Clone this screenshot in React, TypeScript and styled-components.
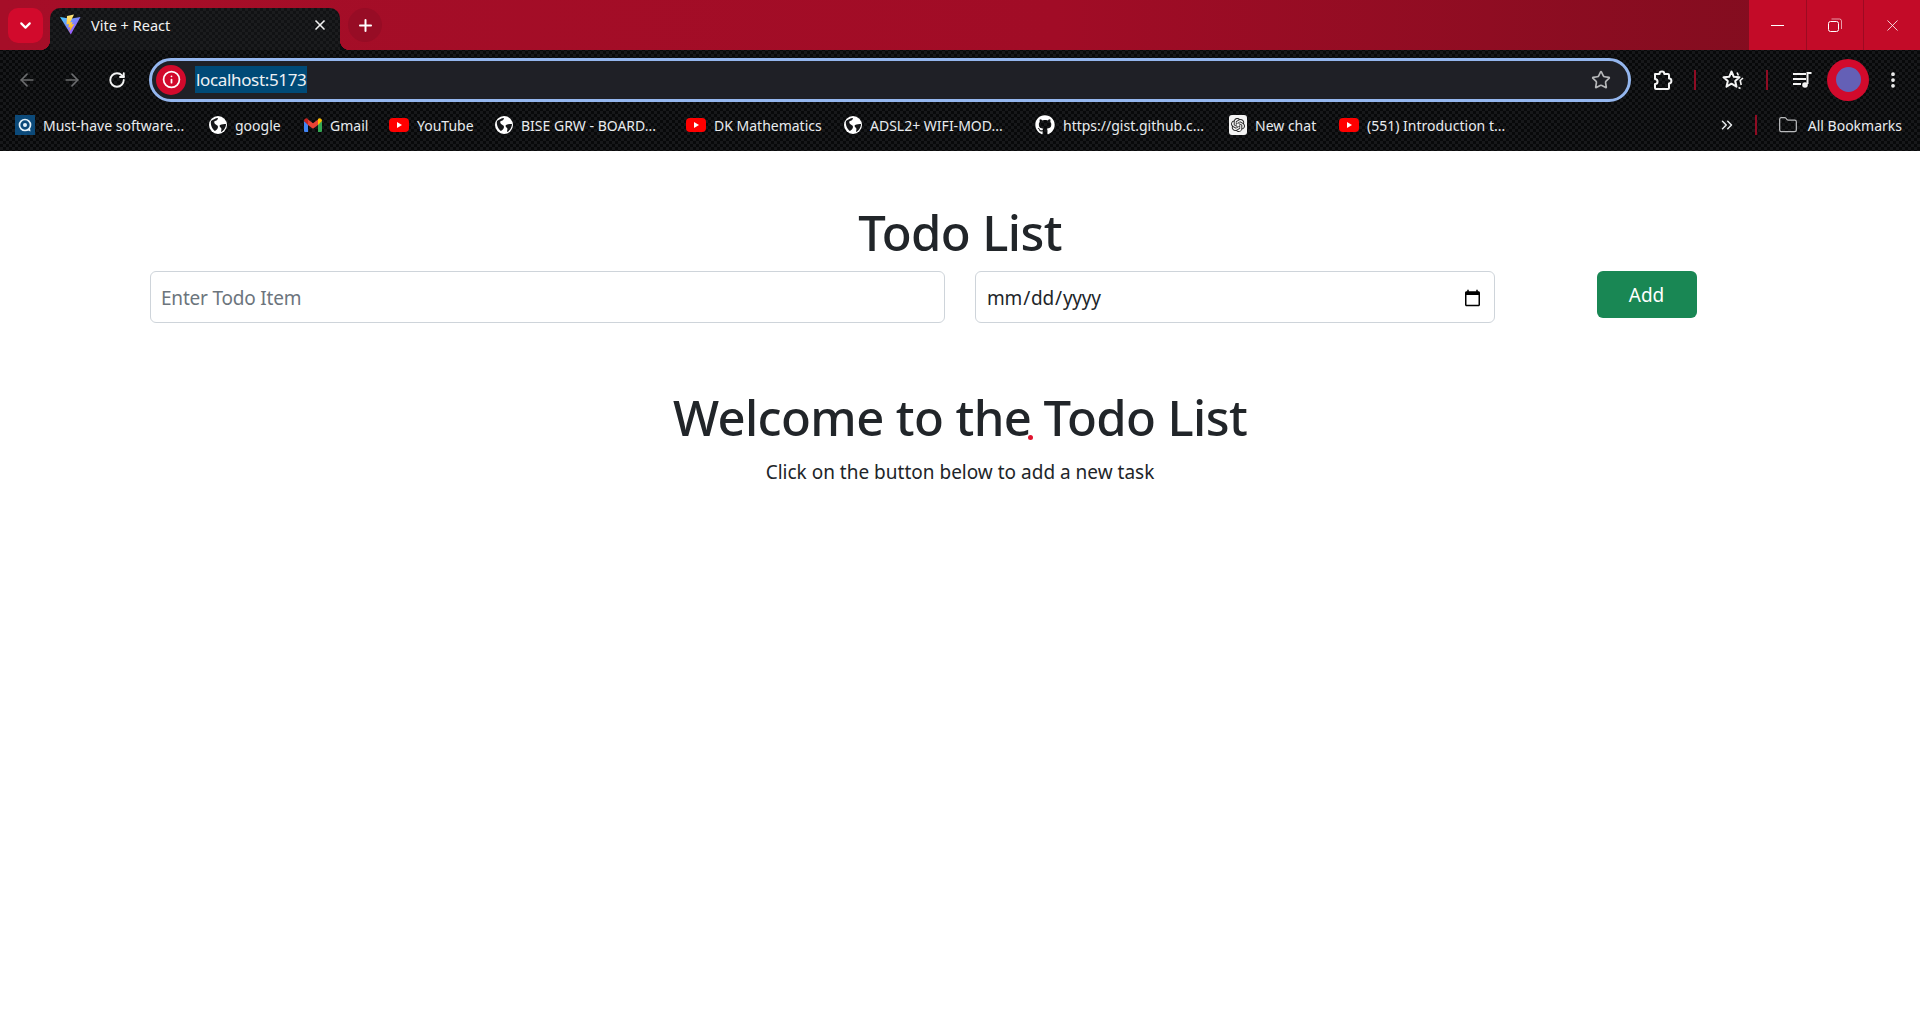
import { FC } from "react";
import styled, { createGlobalStyle } from "styled-components";
import {
  ArrowLeft,
  ArrowRight,
  ChevronDown,
  ChevronsRight,
  Folder,
  Info,
  MoreVertical,
  Plus,
  RotateCw,
  Star,
  X,
} from "lucide-react";
import { FaGithub } from "react-icons/fa";
import { SiOpenai } from "react-icons/si";

const UI_FONT = `"Noto Sans", "Open Sans", sans-serif`;

const GlobalStyle = createGlobalStyle`
  html, body {
    margin: 0;
    padding: 0;
    background: #fff;
    font-family: ${UI_FONT};
  }
  * { box-sizing: border-box; }
`;

const Chrome = styled.header`
  background-color: #08090a;
  background-image:
    linear-gradient(45deg, #17181a 25%, transparent 25%, transparent 75%, #17181a 75%),
    linear-gradient(45deg, #17181a 25%, transparent 25%, transparent 75%, #17181a 75%);
  background-size: 6px 6px;
  background-position: 0 0, 3px 3px;
`;

const TabStrip = styled.div`
  height: 50px;
  display: flex;
  background: linear-gradient(90deg, #a60e28 0%, #a10c26 55%, #7d0d1e 100%);
`;

const TabArea = styled.div`
  flex: 1;
  display: flex;
  align-items: flex-end;
  padding-left: 8px;
`;

const TabSearch = styled.button`
  width: 35px;
  height: 35px;
  margin-bottom: 7px;
  margin-right: 7px;
  border: none;
  border-radius: 10px;
  background: #d20a2c;
  color: #fff;
  display: flex;
  align-items: center;
  justify-content: center;
  padding: 0;
`;

const Tab = styled.div`
  position: relative;
  width: 290px;
  height: 42px;
  border-radius: 10px 10px 0 0;
  background-color: #111214;
  background-image:
    linear-gradient(45deg, #1b1c1e 25%, transparent 25%, transparent 75%, #1b1c1e 75%),
    linear-gradient(45deg, #1b1c1e 25%, transparent 25%, transparent 75%, #1b1c1e 75%);
  background-size: 6px 6px;
  background-position: 0 0, 3px 3px;
  display: flex;
  align-items: center;
  padding: 0 12px 9px 10px;
  color: #f2f2f2;

  &::before,
  &::after {
    content: "";
    position: absolute;
    bottom: 0;
    width: 10px;
    height: 10px;
  }
  &::before {
    left: -10px;
    background: radial-gradient(circle at 0 0, transparent 10px, #0c0d0f 10.5px);
  }
  &::after {
    right: -10px;
    background: radial-gradient(circle at 100% 0, transparent 10px, #0c0d0f 10.5px);
  }
`;

const TabTitle = styled.span`
  flex: 1;
  margin-left: 10px;
  font-size: 14.5px;
`;

const NewTab = styled.button`
  width: 34px;
  height: 34px;
  margin: 0 0 8px 8px;
  border: none;
  border-radius: 50%;
  background: #970c25;
  color: #fff;
  display: flex;
  align-items: center;
  justify-content: center;
  padding: 0;
`;

const WindowControls = styled.div`
  display: flex;
  background: #c30b28;
`;

const WindowButton = styled.div<{ $divided?: boolean }>`
  width: 57px;
  height: 50px;
  display: flex;
  align-items: center;
  justify-content: center;
  color: #fff;
  border-left: ${(p) => (p.$divided ? "1px solid #9c0a22" : "none")};
`;

const MinimizeBar = styled.span`
  width: 13px;
  height: 1px;
  background: #fff;
`;

const RestoreIcon = styled.svg`
  width: 14px;
  height: 14px;
`;

const Toolbar = styled.div`
  height: 57px;
  display: flex;
  align-items: center;
  padding: 2px 0 0 9px;
`;

const NavButton = styled.div<{ $dim?: boolean }>`
  width: 36px;
  height: 36px;
  margin-right: 9px;
  display: flex;
  align-items: center;
  justify-content: center;
  color: ${(p) => (p.$dim ? "#6b6c6e" : "#f4f4f4")};
`;

const AddressBar = styled.div`
  width: 1482px;
  height: 44px;
  margin-left: 5px;
  border: 3px solid #94b6ee;
  border-radius: 22px;
  background: #1f2026;
  display: flex;
  align-items: center;
  padding: 0 17px 0 4px;
`;

const SecurityBadge = styled.div`
  width: 30px;
  height: 30px;
  border-radius: 50%;
  background: #d20a2c;
  color: #fff;
  display: flex;
  align-items: center;
  justify-content: center;
`;

const Url = styled.span`
  margin-left: 9px;
  flex: 1;
  font-size: 17px;
  line-height: 27px;
  color: #eef1f4;
  letter-spacing: -0.35px;
`;

const SelectedUrl = styled.span`
  display: inline-block;
  background: #004a77;
  padding: 0 1px;
`;

const ToolButton = styled.div<{ $width: number }>`
  width: ${(p) => p.$width}px;
  height: 36px;
  display: flex;
  align-items: center;
  justify-content: center;
  color: #f4f4f4;
`;

const ToolDivider = styled.div`
  width: 2px;
  height: 20px;
  margin-left: -1px;
  margin-right: 1px;
  background: #8f0c23;
`;

const Avatar = styled.div`
  width: 42px;
  height: 42px;
  margin-left: -10px;
  border-radius: 50%;
  background: #d20a2c;
  display: flex;
  align-items: center;
  justify-content: center;

  &::after {
    content: "";
    width: 25px;
    height: 25px;
    border-radius: 50%;
    background: #6460b6;
  }
`;

const BookmarkBar = styled.nav`
  height: 44px;
  display: flex;
  align-items: center;
  padding: 0 18px 8px 15px;
  color: #e9ecef;
  font-size: 14px;
`;

const BookmarkItem = styled.a<{ $width?: number }>`
  display: flex;
  align-items: center;
  gap: 8px;
  width: ${(p) => (p.$width ? `${p.$width}px` : "auto")};
  flex: none;
  white-space: nowrap;
`;

const BookmarkTail = styled.div`
  margin-left: auto;
  display: flex;
  align-items: center;
  color: #e9ecef;
`;

const BarDivider = styled.div`
  width: 2px;
  height: 20px;
  margin: 0 21px 0 19px;
  background: #8f0c23;
`;

const FolderIcon = styled(Folder)`
  margin-right: 2px;
`;

const ChatIcon = styled.span`
  width: 18px;
  height: 20px;
  border-radius: 3px;
  background: #f4f4f4;
  color: #222;
  display: flex;
  align-items: center;
  justify-content: center;
  flex: none;
`;

const Main = styled.main`
  padding: 0 138px;
  text-align: center;
  color: #212529;
`;

const Title = styled.h1`
  margin: 0;
  padding-top: 51px;
  font-size: 49px;
  font-weight: 500;
  line-height: 60px;
  letter-spacing: -0.6px;
`;

const TodoRow = styled.div`
  display: grid;
  grid-template-columns: 819px 544px 1fr;
  column-gap: 6px;
  margin-top: 9px;
  align-items: start;
`;

const Cell = styled.div`
  padding: 0 12px;
`;

const Field = styled.input`
  display: block;
  width: 100%;
  height: 52px;
  padding: 7px 10px 5px;
  border: 1px solid #ced4da;
  border-radius: 6px;
  background: #fff;
  color: #212529;
  font-family: ${UI_FONT};
  font-size: 19px;
  letter-spacing: -0.2px;

  &::placeholder {
    color: #6c757d;
  }
`;

const AddButton = styled.button`
  width: 100px;
  height: 47px;
  margin-left: -2px;
  border: none;
  border-radius: 6px;
  background: #198754;
  color: #fff;
  font-family: ${UI_FONT};
  font-size: 19px;
`;

const Welcome = styled.section`
  padding-top: 62px;
`;

const WelcomeTitle = styled.h1`
  margin: 0;
  font-size: 49px;
  font-weight: 500;
  line-height: 65px;
  letter-spacing: -0.6px;
`;

const CursorMark = styled.span`
  position: relative;

  &::after {
    content: "";
    position: absolute;
    left: -3px;
    bottom: 10px;
    width: 5px;
    height: 5px;
    border-radius: 50%;
    background: #e0142f;
  }
`;

const Lead = styled.p`
  margin: 8px 0 0;
  font-size: 19px;
  line-height: 28px;
`;

const QuickIcon: FC = () => (
  <svg width="20" height="20" viewBox="0 0 20 20">
    <rect width="20" height="20" fill="#0c4a7a" />
    <circle cx="10" cy="10" r="5.500" fill="none" stroke="#e6f3fb" strokeWidth="1.700" />
    <circle cx="10" cy="10" r="2" fill="#e6f3fb" />
    <path d="M12 15l3.500 1.500-.5-3.500z" fill="#e6f3fb" />
  </svg>
);

const GlobeIcon: FC = () => (
  <svg width="18" height="18" viewBox="0 0 18 18">
    <circle cx="9" cy="9" r="9" fill="#fff" />
    <path d="M2 5c2-1 4-3 7-3 0 2-2 3-3 3s-1 2 0 3 3 1 3 3-2 3-3 4C4 14 1 9 2 5z" fill="#16171a" />
    <path d="M11 9c2-1 4-1 6-1 0 3-2 7-5 8 0-2 1-3 0-4s-2-2-1-3z" fill="#16171a" />
  </svg>
);

const YoutubeIcon: FC = () => (
  <svg width="20" height="14" viewBox="0 0 20 14">
    <rect width="20" height="14" rx="4" fill="#f00" />
    <path d="M8 4l5 3-5 3z" fill="#fff" />
  </svg>
);

const GmailIcon: FC = () => (
  <svg width="18" height="14" viewBox="0 0 18 14">
    <path d="M0 3v10a1 1 0 0 0 1 1h3V6z" fill="#4285f4" />
    <path d="M14 6v8h3a1 1 0 0 0 1-1V3z" fill="#34a853" />
    <path d="M4 7V1.500L9 5.200l5-3.700V7L9 10.800z" fill="#ea4335" />
    <path d="M0 3c0-2.400 2.600-3.600 4-2v6z" fill="#c5221f" />
    <path d="M14 1c1.500-1.600 4-.4 4 2l-4 4z" fill="#fbbc04" />
  </svg>
);

const GithubIcon: FC = () => <FaGithub size={20} color="#fff" />;

const NewChatIcon: FC = () => (
  <ChatIcon>
    <SiOpenai size={14} />
  </ChatIcon>
);

const ViteLogo: FC = () => (
  <svg width="21" height="21" viewBox="0 0 21 21">
    <defs>
      <linearGradient id="vite-body" x1="0" y1="0" x2="1" y2="1">
        <stop offset="0" stopColor="#41d1ff" />
        <stop offset="1" stopColor="#bd34fe" />
      </linearGradient>
      <linearGradient id="vite-bolt" x1="0" y1="0" x2="0" y2="1">
        <stop offset="0" stopColor="#ffea83" />
        <stop offset="1" stopColor="#ffa800" />
      </linearGradient>
    </defs>
    <path d="M0 3l10.500 1.800L20.500 3 10.800 20.500z" fill="url(#vite-body)" />
    <path d="M14 .5L7 2l-.5 8.500 2.500-.5-.7 3.500 2-.6-1 5 5-8-2.700.5 1-2.500-2.500.5z" fill="url(#vite-bolt)" />
  </svg>
);

const ExtensionsIcon: FC = () => (
  <svg width="22" height="22" viewBox="0 0 22 22" fill="none" stroke="currentColor" strokeWidth="2">
    <path d="M3 5h4.500a2.400 2.400 0 0 1 4.800 0H16a1 1 0 0 1 1 1v3.600a2.400 2.400 0 0 1 0 4.800V19a1 1 0 0 1-1 1H4a1 1 0 0 1-1-1v-4a2.500 2.500 0 0 0 0-5z" strokeLinejoin="round" />
  </svg>
);

const StarListIcon: FC = () => (
  <svg width="24" height="22" viewBox="-2 0 24 22" fill="none" stroke="currentColor" strokeWidth="2" strokeLinejoin="round">
    <path d="M9.500 2.500l2.300 5.300 5.700.5-4.300 3.800 1.300 5.600-5-3-5 3 1.300-5.600L1.500 8.300l5.700-.5z" />
    <path d="M15 3.500l1.400 3M21 9l-2.800 2.500 1 4.500M16.500 18.500l2 1" strokeWidth="1.600" />
  </svg>
);

const MediaIcon: FC = () => (
  <svg width="22" height="20" viewBox="0 0 22 20" fill="none" stroke="currentColor" strokeWidth="2">
    <path d="M1 4h13M1 9h13M1 14h8" />
    <path d="M15.500 14V3h4" />
    <circle cx="13" cy="15" r="2.800" fill="currentColor" stroke="none" />
  </svg>
);

const bookmarks: { label: string; icon: FC; width: number }[] = [
  { label: "Must-have software...", icon: QuickIcon, width: 194 },
  { label: "google", icon: GlobeIcon, width: 95 },
  { label: "Gmail", icon: GmailIcon, width: 85 },
  { label: "YouTube", icon: YoutubeIcon, width: 106 },
  { label: "BISE GRW - BOARD...", icon: GlobeIcon, width: 191 },
  { label: "DK Mathematics", icon: YoutubeIcon, width: 158 },
  { label: "ADSL2+ WIFI-MOD...", icon: GlobeIcon, width: 191 },
  { label: "https://gist.github.c...", icon: GithubIcon, width: 194 },
  { label: "New chat", icon: NewChatIcon, width: 110 },
  { label: "(551) Introduction t...", icon: YoutubeIcon, width: 170 },
];

export default function App() {
  return (
    <>
      <GlobalStyle />
      <Chrome>
        <TabStrip>
          <TabArea>
            <TabSearch>
              <ChevronDown size={17} strokeWidth={3} />
            </TabSearch>
            <Tab>
              <ViteLogo />
              <TabTitle>Vite + React</TabTitle>
              <X size={16} strokeWidth={2.5} />
            </Tab>
            <NewTab>
              <Plus size={19} strokeWidth={2.5} />
            </NewTab>
          </TabArea>
          <WindowControls>
            <WindowButton>
              <MinimizeBar />
            </WindowButton>
            <WindowButton $divided>
              <RestoreIcon viewBox="0 0 14 14" fill="none" stroke="currentColor">
                <rect x="0.500" y="3.500" width="10" height="10" rx="2" />
                <path d="M3.500 1h8a2 2 0 0 1 2 2v8" opacity="0.6" />
              </RestoreIcon>
            </WindowButton>
            <WindowButton $divided>
              <X size={19} strokeWidth={1} />
            </WindowButton>
          </WindowControls>
        </TabStrip>
        <Toolbar>
          <NavButton $dim>
            <ArrowLeft size={20} />
          </NavButton>
          <NavButton $dim>
            <ArrowRight size={20} />
          </NavButton>
          <NavButton>
            <RotateCw size={18} strokeWidth={2.5} />
          </NavButton>
          <AddressBar>
            <SecurityBadge>
              <Info size={19} strokeWidth={2.2} />
            </SecurityBadge>
            <Url>
              <SelectedUrl>localhost:5173</SelectedUrl>
            </Url>
            <Star size={20} color="#b6b7b9" />
          </AddressBar>
          <ToolButton $width={64}>
            <ExtensionsIcon />
          </ToolButton>
          <ToolDivider />
          <ToolButton $width={70}>
            <StarListIcon />
          </ToolButton>
          <ToolDivider />
          <ToolButton $width={68}>
            <MediaIcon />
          </ToolButton>
          <Avatar />
          <ToolButton $width={48}>
            <MoreVertical size={20} strokeWidth={2.5} />
          </ToolButton>
        </Toolbar>
        <BookmarkBar>
          {bookmarks.map(({ label, icon: Icon, width }) => (
            <BookmarkItem key={label} $width={width}>
              <Icon />
              {label}
            </BookmarkItem>
          ))}
          <BookmarkTail>
            <ChevronsRight size={18} />
            <BarDivider />
            <BookmarkItem>
              <FolderIcon size={20} strokeWidth={1.5} color="#b9babc" />
              All Bookmarks
            </BookmarkItem>
          </BookmarkTail>
        </BookmarkBar>
      </Chrome>
      <Main>
        <Title>Todo List</Title>
        <TodoRow>
          <Cell>
            <Field type="text" placeholder="Enter Todo Item" />
          </Cell>
          <Cell>
            <Field type="date" />
          </Cell>
          <Cell>
            <AddButton type="button">Add</AddButton>
          </Cell>
        </TodoRow>
        <Welcome>
          <WelcomeTitle>
            Welcome to the<CursorMark /> Todo List
          </WelcomeTitle>
          <Lead>Click on the button below to add a new task</Lead>
        </Welcome>
      </Main>
    </>
  );
}
